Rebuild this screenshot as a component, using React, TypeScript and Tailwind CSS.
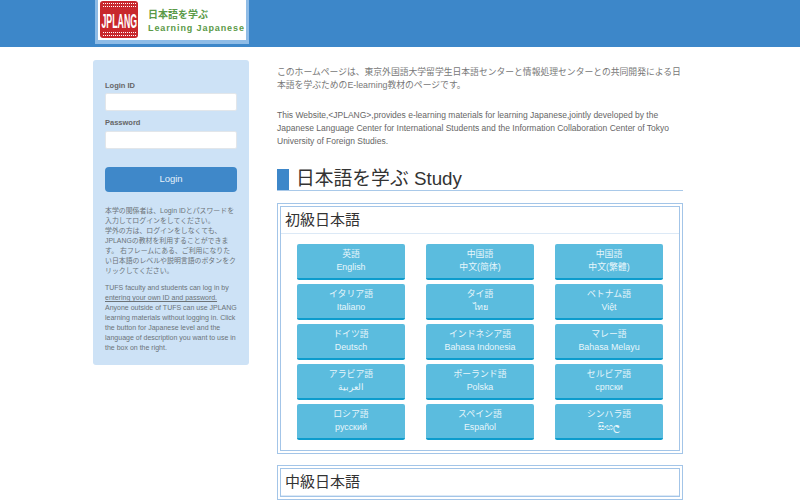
const sans = "font-['Liberation_Sans','Noto_Sans_CJK_JP',sans-serif]";

const languages = [
  ["英語", "English"],
  ["中国語", "中文(简体)"],
  ["中国語", "中文(繁體)"],
  ["イタリア語", "Italiano"],
  ["タイ語", "ไทย"],
  ["ベトナム語", "Việt"],
  ["ドイツ語", "Deutsch"],
  ["インドネシア語", "Bahasa Indonesia"],
  ["マレー語", "Bahasa Melayu"],
  ["アラビア語", "العربية"],
  ["ポーランド語", "Polska"],
  ["セルビア語", "српски"],
  ["ロシア語", "русский"],
  ["スペイン語", "Español"],
  ["シンハラ語", "සිංහල"],
];

const noteLines = [
  "本学の関係者は、Login IDとパスワードを",
  "入力してログインをしてください。",
  "学外の方は、ログインをしなくても、",
  "JPLANGの教材を利用することができま",
  "す。 右フレームにある、ご利用になりた",
  "い日本語のレベルや説明言語のボタンをク",
  "リックしてください。",
];

function Logo() {
  return (
    <div className="flex h-[44px] w-[154px] items-start gap-[10px] border-x-[3px] border-b-[4px] border-[#8fbce6] bg-white pl-[2px]">
      <div className="mt-[1px] flex h-[37px] w-[38px] shrink-0 flex-col items-center justify-between rounded-[3px] bg-[#c8282c] py-[2px]">
        <span className="h-[4px] w-[33px] border-y border-dotted border-white" />
        <span className="scale-x-[0.8] scale-y-[1.9] text-[11px] leading-[20px] font-bold whitespace-nowrap text-white">
          JPLANG
        </span>
        <span className="h-[4px] w-[33px] border-y border-dotted border-white" />
      </div>
      <div className="flex flex-col pt-[9px] text-[#5b9a48]">
        <span className="text-[10px] leading-[12px] font-bold">日本語を学ぶ</span>
        <span className="mt-[2px] text-[9px] leading-[11px] font-bold tracking-[0.9px] whitespace-nowrap">
          Learning Japanese
        </span>
      </div>
    </div>
  );
}

function Sidebar() {
  return (
    <aside className="mt-[13px] h-[305px] w-[156px] rounded-[3px] bg-[#cde2f6] px-[12px] pt-[20px] text-[#666]">
      <label className="block text-[7.5px] leading-[11px] font-bold">Login ID</label>
      <div className="mt-[2px] h-[18px] rounded-[2px] border border-[#e2e6ea] bg-white" />
      <label className="mt-[6px] block text-[7.5px] leading-[11px] font-bold">Password</label>
      <div className="mt-[3px] h-[18px] rounded-[2px] border border-[#e2e6ea] bg-white" />
      <button className="mt-[18px] block h-[25px] w-full rounded-[4px] bg-[#3f88c9] text-[9.5px] text-[#e4f0fa]">
        Login
      </button>
      <p className="mt-[14px] text-[6.9px] leading-[10px] whitespace-nowrap text-[#6c7378]">
        {noteLines.map((line) => (
          <span key={line} className="block">
            {line}
          </span>
        ))}
      </p>
      <p className="mt-[7px] text-[7px] leading-[10px] text-[#6c7378]">
        TUFS faculty and students can log in by <span className="underline">entering your own ID and password.</span>{" "}
        Anyone outside of TUFS can use JPLANG learning materials without logging in. Click the button for Japanese level and the language of description you want to use in the box on the right.
      </p>
    </aside>
  );
}

function LevelBox({ title, children }: { title: string; children?: React.ReactNode }) {
  return (
    <section className="border-[4px] border-double border-[#a3c5e8]">
      <h3 className="border-b border-[#dce9f6] px-[4px] pt-[2px] pb-[3px] text-[15px] leading-[21px] text-[#333]">
        {title}
      </h3>
      {children}
    </section>
  );
}

export default function App() {
  return (
    <div className={`h-[500px] w-[800px] overflow-hidden bg-white ${sans}`}>
      <header className="h-[47px] bg-[#3d87c9] pl-[95px]">
        <Logo />
      </header>
      <div className="flex gap-[28px] pl-[93px]">
        <Sidebar />
        <main className="mt-[19px] w-[406px]">
          <p className="text-[8.8px] leading-[13px] text-[#777]">
            このホームページは、東京外国語大学留学生日本語センターと情報処理センターとの共同開発による日本語を学ぶためのE-learning教材のページです。
          </p>
          <p className="mt-[17px] text-[8.5px] leading-[13px] text-[#666]">
            This Website,&lt;JPLANG&gt;,provides e-learning materials for learning Japanese,jointly developed by the Japanese Language Center for International Students and the Information Collaboration Center of Tokyo University of Foreign Studies.
          </p>
          <h2 className="mt-[20px] border-b border-[#a9c9e9] text-[18.8px] leading-[22px] text-[#333]">
            <span className="flex items-center gap-[7px]">
              <span className="h-[21px] w-[12px] bg-[#3d87c9]" />
              日本語を学ぶ Study
            </span>
          </h2>
          <div className="mt-[12px]">
            <LevelBox title="初級日本語">
              <div className="grid grid-cols-[108px_108px_108px] justify-center gap-x-[21px] gap-y-[4px] pt-[10px] pb-[10px]">
                {languages.map(([ja, native], i) => (
                  <a
                    key={i}
                    className="flex h-[36px] flex-col items-center justify-center rounded-[2px] border-b-2 border-[#0d9ccd] bg-[#5bbcde] text-[8.9px] leading-[13px] text-[#e8f6fb]"
                  >
                    <span>{ja}</span>
                    <span>{native}</span>
                  </a>
                ))}
              </div>
            </LevelBox>
          </div>
          <div className="mt-[11px]">
            <LevelBox title="中級日本語" />
          </div>
        </main>
      </div>
    </div>
  );
}
